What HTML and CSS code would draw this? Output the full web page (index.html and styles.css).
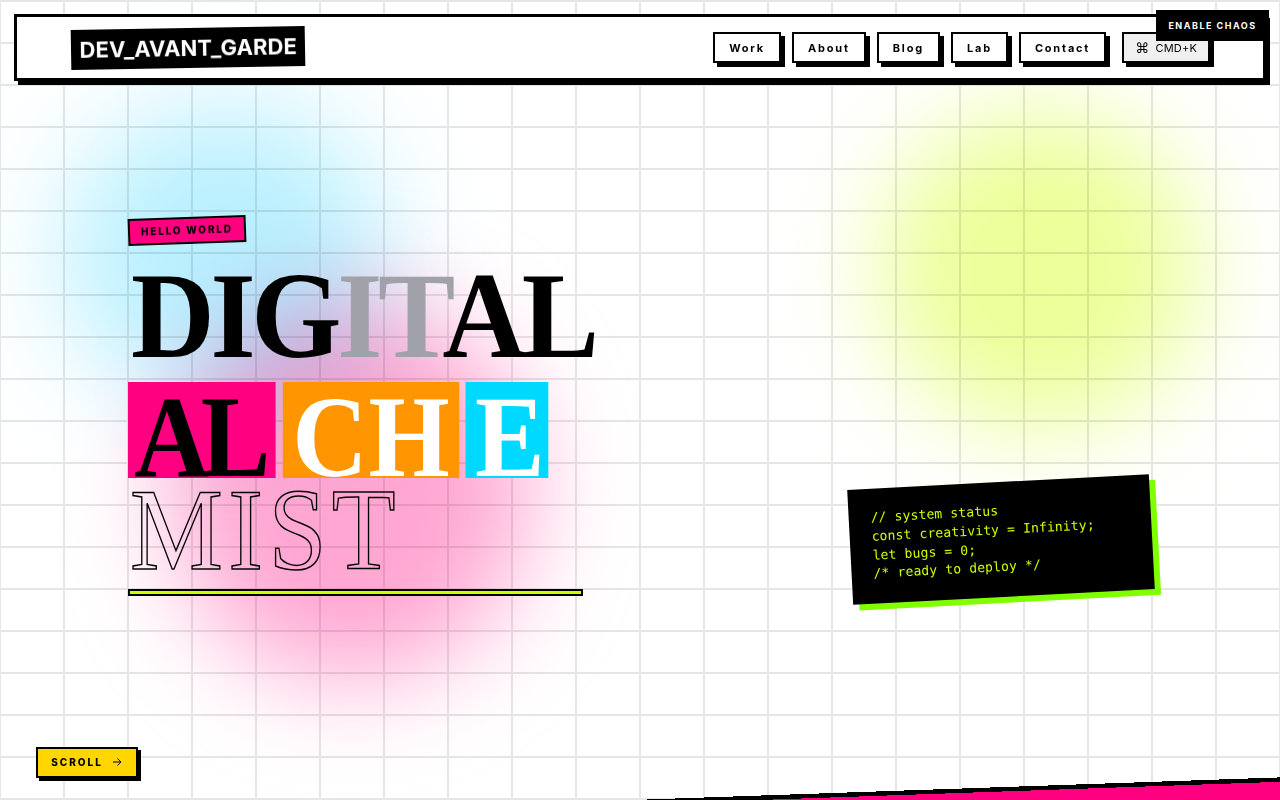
FILE: index.html
```html
<!DOCTYPE html>
<html lang="en">
<head>
    <meta charset="UTF-8">
    <meta name="viewport" content="width=device-width, initial-scale=1.0">
    <title>DEV_AVANT_GARDE</title>
    <link rel="stylesheet" href="styles.css">
</head>
<body>

    <div class="blob blob-cyan"></div>
    <div class="blob blob-pink"></div>
    <div class="blob blob-lime"></div>

    <header class="site-header">
        <a class="logo">DEV_AVANT_GARDE</a>
        <nav class="nav">
            <a class="nav-link">Work</a>
            <a class="nav-link">About</a>
            <a class="nav-link">Blog</a>
            <a class="nav-link">Lab</a>
            <a class="nav-link">Contact</a>
            <button class="cmd-btn"><span class="cmd-icon">⌘</span> CMD+K</button>
        </nav>
    </header>

    <button class="chaos-btn">ENABLE CHAOS</button>

    <main class="hero">
        <section class="hero-text">
            <span class="badge">HELLO WORLD</span>
            <h1 class="title">
                <span class="line line-first">DIG<span class="muted">IT</span>AL</span>
                <span class="line line-boxes"><span class="box box-pink">AL</span><span class="box box-orange">CH</span><span class="box box-cyan">E</span></span>
                <span class="line line-outline">MIST</span>
            </h1>
            <div class="title-bar"></div>
        </section>

        <pre class="code-card">// system status
const creativity = Infinity;
let bugs = 0;
/* ready to deploy */</pre>
    </main>

    <button class="scroll-btn">SCROLL
        <svg class="scroll-icon" viewBox="0 0 24 24" fill="none" stroke="currentColor" stroke-width="2">
            <path d="M4 12h16M13 5l7 7-7 7"/>
        </svg>
    </button>

    <div class="bottom-strip"></div>

</body>
</html>
```

FILE: styles.css
```css
* {
    box-sizing: border-box;
}
html {
    overflow: hidden;
}
body {
    margin: 0;
    height: 800px;
    overflow: hidden;
    position: relative;
    font-family: Inter, sans-serif;
    color: #000;
    background-color: #fff;
    background-image:
        linear-gradient(to right, #e6e6e6 2px, transparent 2px),
        linear-gradient(to bottom, #e6e6e6 2px, transparent 2px);
    background-size: 64px 42px;
    background-position: -1px 0;
}

/* blurred colour blobs */
.blob {
    position: absolute;
    border-radius: 50%;
    filter: blur(50px);
    mix-blend-mode: multiply;
}
.blob-cyan {
    left: 65px;
    top: 105px;
    width: 320px;
    height: 300px;
    filter: blur(55px);
    background: #b8f0ff;
}
.blob-pink {
    left: 170px;
    top: 300px;
    width: 360px;
    height: 380px;
    background: #ffa6d2;
}
.blob-lime {
    left: 880px;
    top: 110px;
    width: 320px;
    height: 320px;
    background: #ecff99;
}

/* header */
.site-header {
    position: relative;
    margin: 14px 14px 0;
    height: 67px;
    padding: 0 53px 0 54px;
    display: flex;
    align-items: center;
    justify-content: space-between;
    background: #fff;
    border: 3px solid #000;
    box-shadow: 4px 4px 0 #000;
}
.logo {
    background: #000;
    color: #fff;
    font-size: 22px;
    font-weight: 700;
    letter-spacing: 0.1px;
    padding: 7px 8.5px;
    transform: rotate(-1deg);
}
.nav {
    display: flex;
    align-items: center;
    gap: 11px;
}
.nav-link {
    padding: 8px 14px;
    height: 31px;
    font-size: 11px;
    font-weight: 700;
    letter-spacing: 1.8px;
    line-height: 13px;
    background: #fff;
    border: 2px solid #000;
    box-shadow: 4px 4px 0 #000;
}
.cmd-btn {
    margin-left: 5px;
    height: 31px;
    padding: 0 11px;
    display: flex;
    align-items: center;
    gap: 6px;
    font-family: Inter, sans-serif;
    font-size: 11px;
    letter-spacing: 0.2px;
    color: #000;
    background: #f0f0f0;
    border: 2px solid #000;
    box-shadow: 4px 4px 0 #000;
}
.cmd-icon {
    font-family: "DejaVu Sans", sans-serif;
    font-size: 14px;
}
.chaos-btn {
    position: absolute;
    top: 10px;
    right: 11px;
    width: 113px;
    height: 31px;
    padding: 0;
    border: 0;
    background: #000;
    color: #fff;
    font-family: Inter, sans-serif;
    font-size: 9px;
    font-weight: 700;
    letter-spacing: 1.5px;
}

/* hero */
.hero {
    position: relative;
    display: flex;
    justify-content: space-between;
    align-items: flex-start;
    padding: 136px 128px 0 128px;
}
.badge {
    display: inline-block;
    padding: 5px 11px;
    font-size: 10px;
    font-weight: 800;
    line-height: 13px;
    letter-spacing: 1.8px;
    background: #ff0080;
    border: 2px solid #000;
    transform: rotate(-2deg);
}
.title {
    margin: 16px 0 0;
    font-family: "Liberation Serif", serif;
    font-weight: 700;
}
.line {
    display: block;
    white-space: nowrap;
    transform: scaleX(0.9);
    transform-origin: left top;
}
.line-first {
    height: 112px;
    margin-left: 3px;
    font-size: 122px;
    line-height: 112px;
    letter-spacing: -4.5px;
    transform: scaleX(0.95);
}
.muted {
    color: #a1a1aa;
}
.line-boxes {
    display: flex;
    gap: 7.2px;
    height: 96px;
    margin-top: 10px;
    font-size: 116px;
    line-height: 111px;
    letter-spacing: -10px;
}
.box {
    display: block;
}
.box-pink {
    width: 164.4px;
    padding-left: 7px;
    background: #ff0080;
}
.box-orange {
    width: 196.7px;
    padding-left: 11px;
    letter-spacing: 1px;
    background: #ff9500;
    color: #fff;
}
.box-cyan {
    width: 91.1px;
    padding-left: 10px;
    background: #00d9ff;
    color: #fff;
}
.line-outline {
    height: 92px;
    margin-left: 2px;
    font-size: 116px;
    line-height: 104px;
    font-weight: 400;
    letter-spacing: 6px;
    color: transparent;
    -webkit-text-stroke: 1.5px #000;
}
.title-bar {
    width: 455px;
    height: 7px;
    margin-top: 19px;
    background: #ccff00;
    border: 2px solid #000;
}
.code-card {
    width: 302px;
    margin: 265px 0 0;
    padding: 20px 22px;
    font-family: "DejaVu Sans Mono", monospace;
    font-size: 13px;
    letter-spacing: 0.15px;
    line-height: 18.75px;
    color: #ccff00;
    background: #000;
    box-shadow: 6px 6px 0 #7fff00;
    transform: rotate(-3deg);
}

/* bottom left + strip */
.scroll-btn {
    position: absolute;
    left: 36px;
    top: 747px;
    width: 102px;
    height: 31px;
    display: flex;
    align-items: center;
    justify-content: center;
    gap: 8px;
    padding: 0 0 1px;
    font-family: Inter, sans-serif;
    font-size: 10px;
    font-weight: 800;
    letter-spacing: 2px;
    color: #000;
    background: #ffd600;
    border: 2px solid #000;
    box-shadow: 3px 3px 0 #000;
}
.scroll-icon {
    width: 12px;
    height: 12px;
}
.bottom-strip {
    position: absolute;
    left: 0;
    bottom: 0;
    width: 100%;
    height: 24px;
    background: linear-gradient(-2deg, #ff0080 18.2px, #000 18.2px, #000 22.6px, transparent 22.6px);
}
```
